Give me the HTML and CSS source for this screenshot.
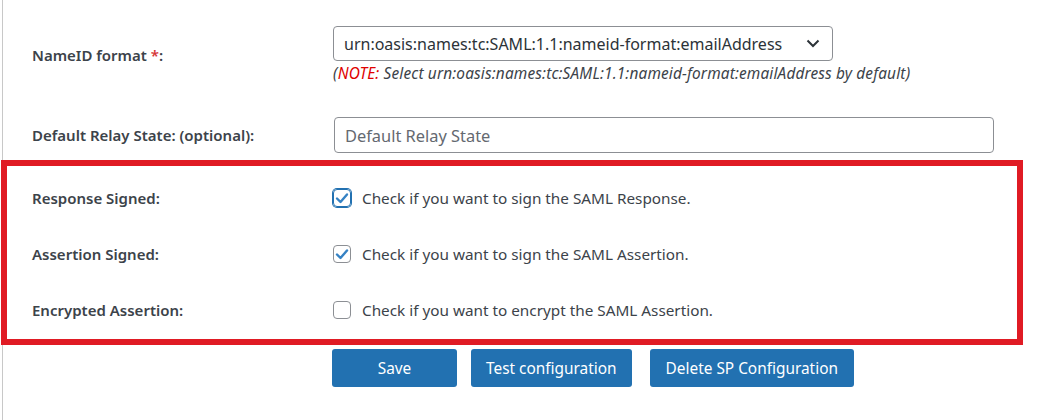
FILE: index.html
```html
<!DOCTYPE html>
<html lang="en">
<head>
    <meta charset="UTF-8">
    <meta name="viewport" content="width=device-width, initial-scale=1.0">
    <title>SP Configuration</title>
    <link rel="stylesheet" href="styles.css">
</head>
<body>
    <div class="wrap">
        <!-- NameID format -->
        <div class="row row-nameid">
            <div class="label">NameID format <span class="req">*</span>:</div>
            <div class="field">
                <div class="select">
                    <span>urn:oasis:names:tc:SAML:1.1:nameid-format:emailAddress</span>
                    <svg class="chevron" width="14" height="9" viewBox="0 0 14 9">
                        <polyline points="1.5,1.5 7,7 12.5,1.5" fill="none" stroke="#2c3338" stroke-width="2"/>
                    </svg>
                </div>
                <p class="note">(<span class="note-red">NOTE:</span> Select urn:oasis:names:tc:SAML:1.1:nameid-format:emailAddress by default)</p>
            </div>
        </div>

        <!-- Relay state -->
        <div class="row row-relay">
            <div class="label">Default Relay State: (optional):</div>
            <div class="field">
                <input class="text-input" type="text" placeholder="Default Relay State">
            </div>
        </div>

        <!-- Signing options (highlighted) -->
        <div class="highlight">
            <div class="row row-check">
                <div class="label">Response Signed:</div>
                <div class="field check-field">
                    <span class="checkbox focused">
                        <svg width="14" height="12" viewBox="0 0 14 12"><polyline points="2,6.5 5.5,10 12,2.5" fill="none" stroke="#3582c4" stroke-width="2.4" stroke-linecap="round" stroke-linejoin="round"/></svg>
                    </span>
                    <span class="check-text">Check if you want to sign the SAML Response.</span>
                </div>
            </div>
            <div class="row row-check">
                <div class="label">Assertion Signed:</div>
                <div class="field check-field">
                    <span class="checkbox">
                        <svg width="14" height="12" viewBox="0 0 14 12"><polyline points="2,6.5 5.5,10 12,2.5" fill="none" stroke="#3582c4" stroke-width="2.4" stroke-linecap="round" stroke-linejoin="round"/></svg>
                    </span>
                    <span class="check-text">Check if you want to sign the SAML Assertion.</span>
                </div>
            </div>
            <div class="row row-check">
                <div class="label">Encrypted Assertion:</div>
                <div class="field check-field">
                    <span class="checkbox"></span>
                    <span class="check-text">Check if you want to encrypt the SAML Assertion.</span>
                </div>
            </div>
        </div>

        <!-- Buttons -->
        <div class="buttons">
            <button class="btn btn-save">Save</button>
            <button class="btn btn-test">Test configuration</button>
            <button class="btn btn-delete">Delete SP Configuration</button>
        </div>
    </div>
</body>
</html>
```

FILE: styles.css
```css
body {
    margin: 0;
    padding: 0;
    background: #fff;
    font-family: "Noto Sans", "Open Sans", sans-serif;
    color: #2c3338;
}
.wrap {
    margin-left: 2px;
    border-left: 1px solid #c8c8c8;
    min-height: 420px;
    box-sizing: border-box;
}
.row {
    display: grid;
    grid-template-columns: 301px 1fr;
    align-items: center;
    padding-left: 29px;
}
.label {
    font-size: 15px;
    font-weight: 600;
    color: #3c434a;
}
.req {
    color: #d63638;
}
.row-nameid {
    padding-top: 26px;
}
.select {
    width: 500px;
    height: 35px;
    box-sizing: border-box;
    border: 1px solid #8c8f94;
    border-radius: 4px;
    display: flex;
    align-items: center;
    justify-content: space-between;
    padding: 0 12px 0 10px;
    font-size: 16px;
    color: #2c3338;
}
.note {
    margin: 4px 0 0 0;
    font-size: 15.4px;
    line-height: 18px;
    font-style: italic;
    color: #3c434a;
    letter-spacing: 0.15px;
}
.note-red {
    color: #e00000;
}
.row-relay {
    padding-top: 34px;
}
.text-input {
    width: 660px;
    height: 36px;
    box-sizing: border-box;
    margin-left: 1px;
    border: 1px solid #8c8f94;
    border-radius: 4px;
    padding: 0 10px;
    font-family: "Noto Sans", sans-serif;
    font-size: 16.4px;
}
.text-input::placeholder {
    color: #646970;
}
.highlight {
    margin: 7px 0 0 -2px;
    width: 1022px;
    height: 185px;
    box-sizing: border-box;
    border: 6px solid #e01b24;
    padding-top: 4px;
}
.highlight .row {
    height: 56px;
    padding-left: 25px;
}
.check-field {
    display: flex;
    align-items: center;
}
.checkbox {
    width: 18px;
    height: 18px;
    box-sizing: border-box;
    border: 1px solid #8c8f94;
    border-radius: 4px;
    display: flex;
    align-items: center;
    justify-content: center;
    margin-right: 11px;
}
.checkbox.focused {
    border-color: #2271b1;
    box-shadow: 0 0 0 1px #2271b1;
}
.check-text {
    font-size: 15.3px;
    color: #3c434a;
}
.buttons {
    display: flex;
    padding: 4px 0 0 329px;
}
.btn {
    height: 38px;
    border: none;
    border-radius: 3px;
    background: #2271b1;
    color: #fff;
    font-family: "Noto Sans", sans-serif;
    font-size: 15.4px;
    padding: 0 16px;
    margin-right: 14px;
}
.btn-save {
    width: 125px;
}
.btn-test {
    padding: 0 15px;
}
.btn-delete {
    margin-left: 4px;
}
```
